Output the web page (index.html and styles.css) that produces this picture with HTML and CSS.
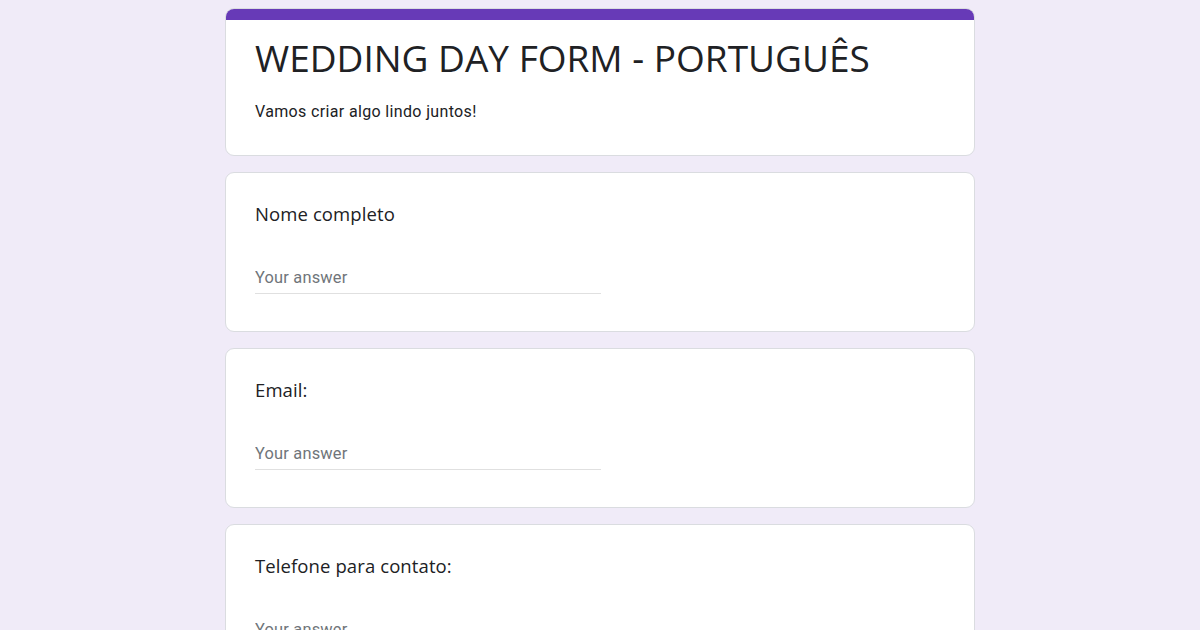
FILE: index.html
```html
<!DOCTYPE html>
<html lang="pt">
<head>
    <meta charset="UTF-8">
    <meta name="viewport" content="width=device-width, initial-scale=1.0">
    <title>WEDDING DAY FORM - PORTUGUÊS</title>
    <link rel="stylesheet" href="styles.css">
</head>
<body>
    <div class="form">
        <div class="card header-card">
            <div class="bar"></div>
            <div class="header-body">
                <h1 class="title">WEDDING DAY FORM - PORTUGUÊS</h1>
                <div class="description">Vamos criar algo lindo juntos!</div>
            </div>
        </div>

        <div class="card question">
            <div class="question-title">Nome completo</div>
            <input class="answer" type="text" placeholder="Your answer">
        </div>

        <div class="card question">
            <div class="question-title">Email:</div>
            <input class="answer" type="text" placeholder="Your answer">
        </div>

        <div class="card question">
            <div class="question-title">Telefone para contato:</div>
            <input class="answer" type="text" placeholder="Your answer">
        </div>
    </div>
</body>
</html>
```

FILE: styles.css
```css
html {
    background-color: #f0ebf8;
}
body {
    margin: 0;
    padding: 8px 0 0;
    font-family: Roboto, Arial, sans-serif;
    color: #202124;
}
.form {
    width: 750px;
    margin: 0 auto;
    display: flex;
    flex-direction: column;
    gap: 16px;
}
.card {
    background: #fff;
    border: 1px solid #dadce0;
    border-radius: 9px;
    box-sizing: border-box;
    overflow: hidden;
}
.bar {
    height: 11px;
    background-color: #673ab7;
}
.header-body {
    padding: 15px 29px 32px;
}
.title {
    margin: 0;
    font-family: "Open Sans", sans-serif;
    font-weight: 400;
    font-size: 37px;
    line-height: 46px;
}
.description {
    margin-top: 20px;
    font-size: 16px;
    line-height: 22px;
    letter-spacing: 0.35px;
}
.question {
    height: 160px;
    padding: 27px 29px 0;
}
.question-title {
    font-family: "Open Sans", sans-serif;
    font-size: 18.5px;
    line-height: 28px;
    letter-spacing: 0.1px;
}
.answer {
    display: block;
    width: 346px;
    margin-top: 38px;
    padding: 0 0 3px;
    border: none;
    border-bottom: 1px solid #e0e0e0;
    outline: none;
    font-family: Roboto, Arial, sans-serif;
    font-size: 16.4px;
    line-height: 24px;
    letter-spacing: 0.2px;
    color: #202124;
    background: transparent;
}
.answer::placeholder {
    color: #70757a;
}
```
